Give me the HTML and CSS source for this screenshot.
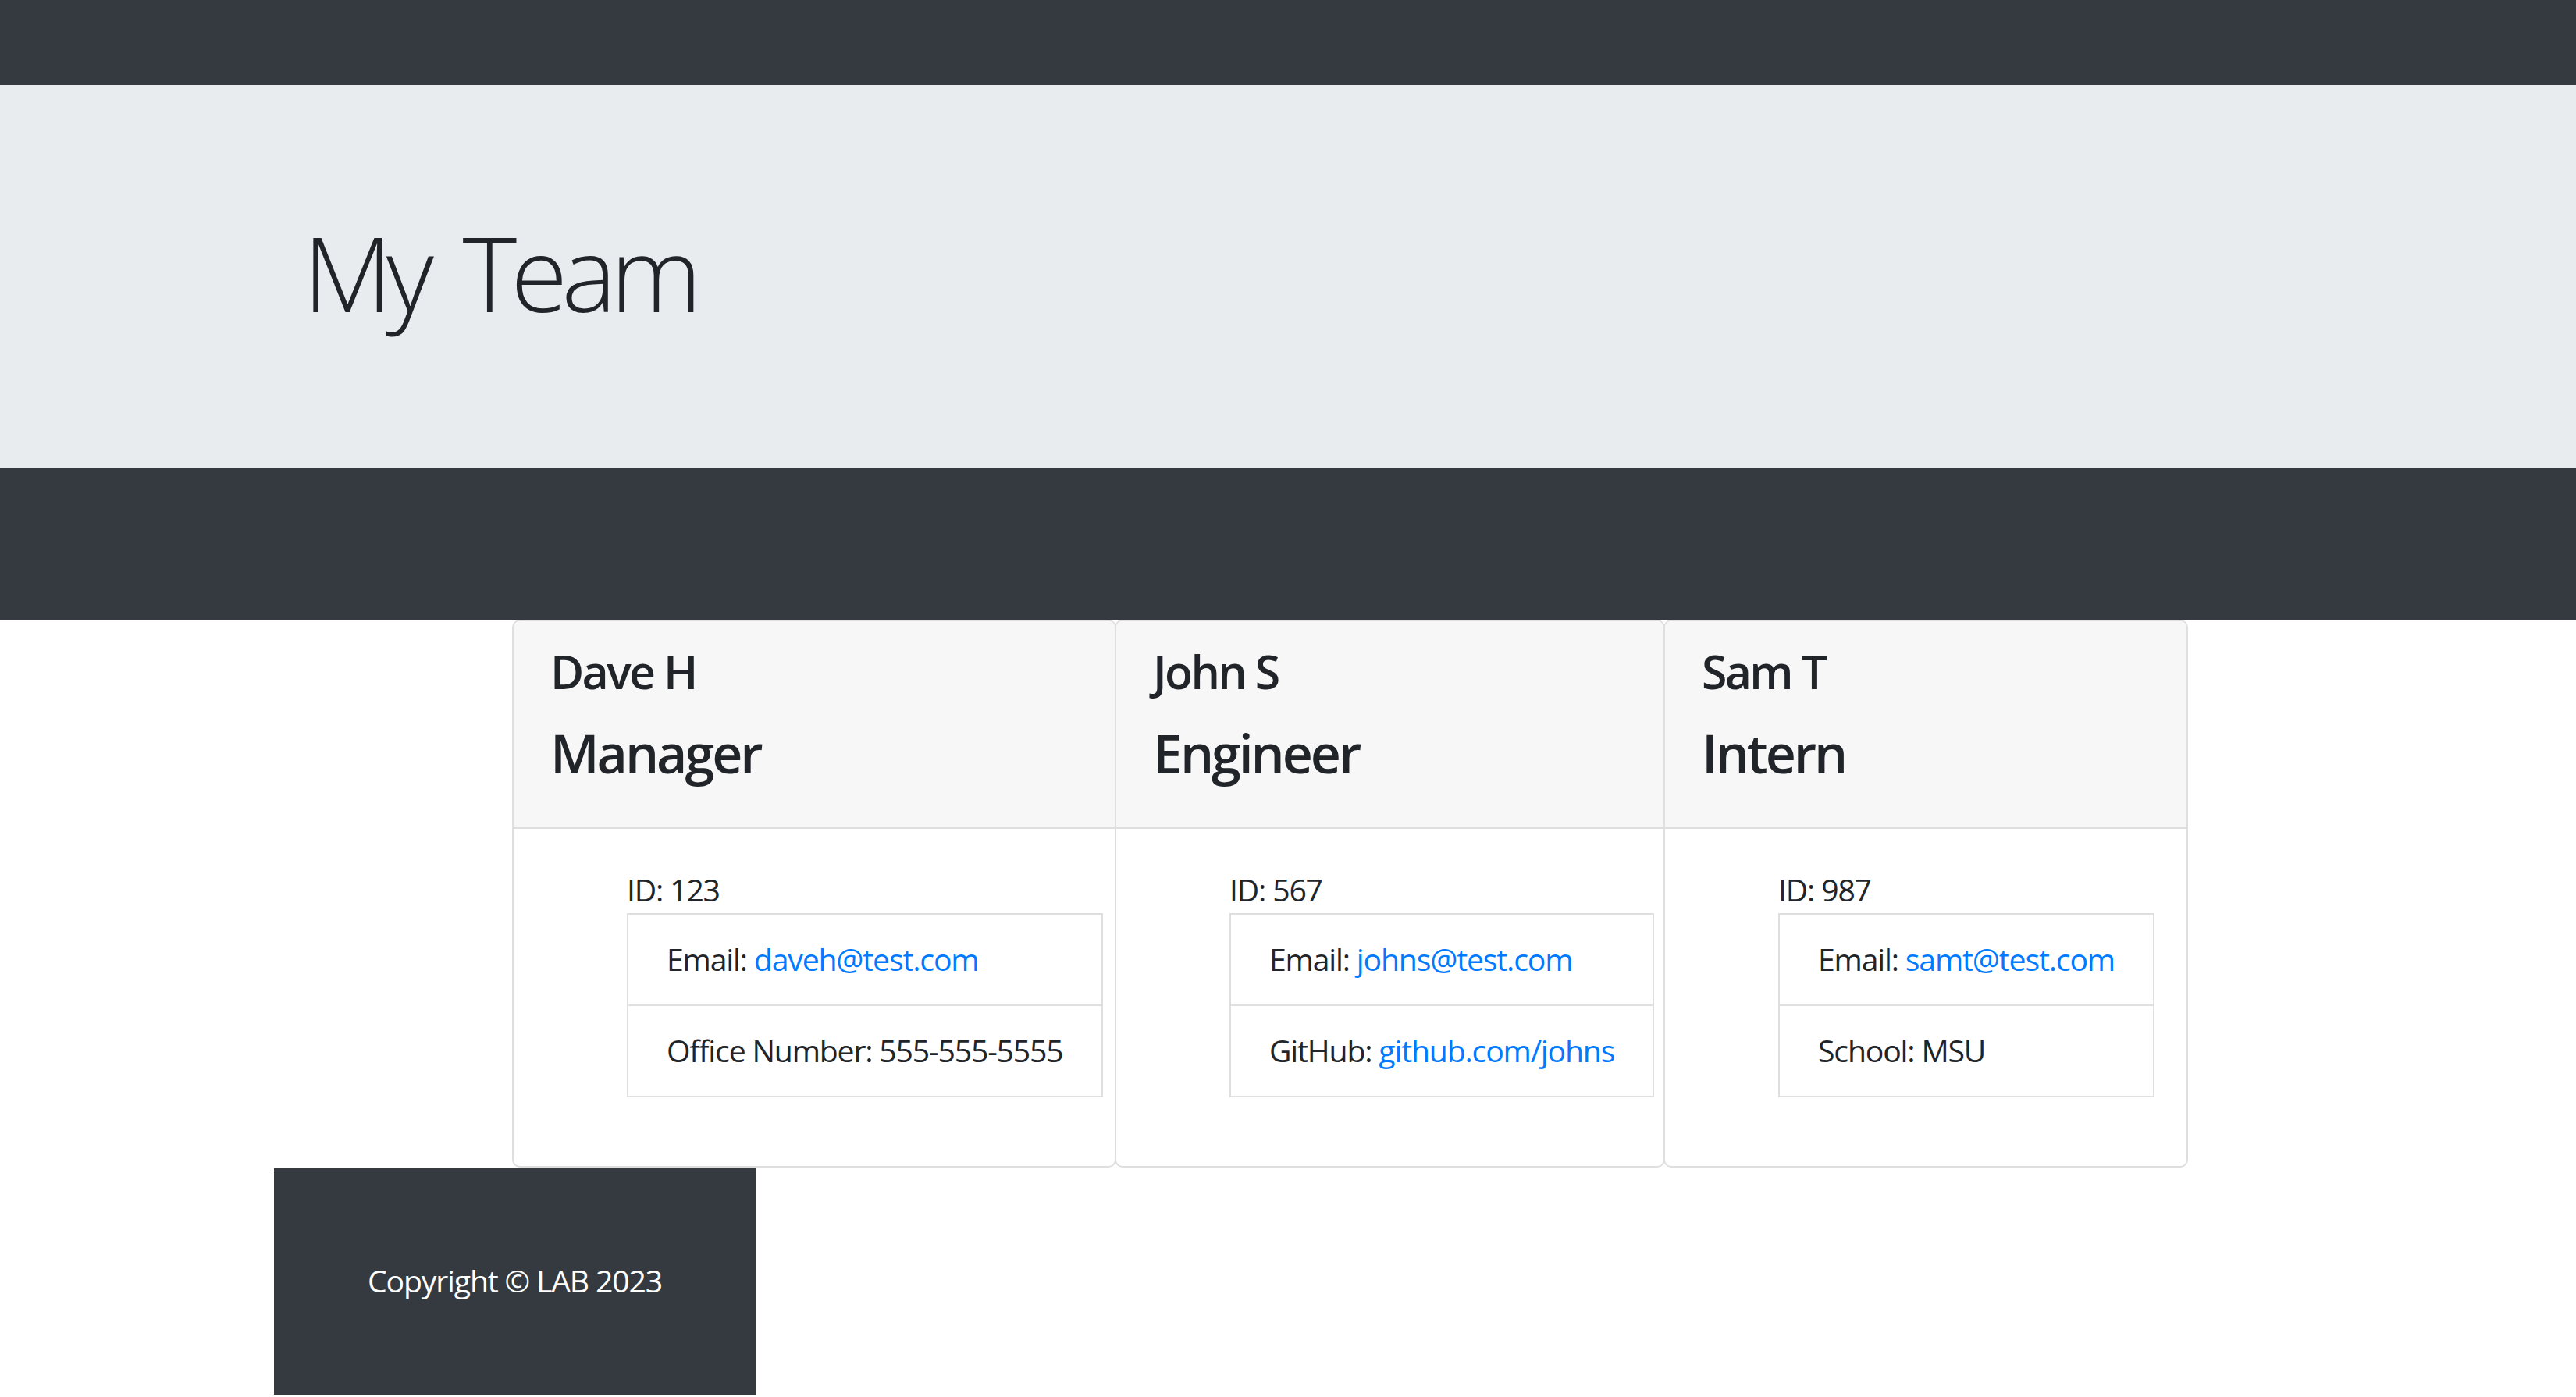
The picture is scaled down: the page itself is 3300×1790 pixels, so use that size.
FILE: index.html
```html
<!DOCTYPE html>
<html lang="en">
<head>
<meta charset="utf-8">
<title>My Team</title>
<link rel="stylesheet" href="styles.css">
</head>
<body>
<nav class="topbar"></nav>
<header class="hero">
  <h1 class="hero-title">My Team</h1>
</header>
<div class="subbar"></div>
<main class="team">
  <section class="card card-manager">
    <div class="card-header">
      <h2 class="card-name">Dave H</h2>
      <h3 class="card-role">Manager</h3>
    </div>
    <div class="card-body">
      <div class="details">
        <p class="emp-id">ID: 123</p>
        <ul class="list-group">
          <li class="list-item">Email: <a class="link" href="mailto:daveh@test.com">daveh@test.com</a></li>
          <li class="list-item">Office Number: 555-555-5555</li>
        </ul>
      </div>
    </div>
  </section>
  <section class="card card-engineer">
    <div class="card-header">
      <h2 class="card-name">John S</h2>
      <h3 class="card-role">Engineer</h3>
    </div>
    <div class="card-body">
      <div class="details">
        <p class="emp-id">ID: 567</p>
        <ul class="list-group">
          <li class="list-item">Email: <a class="link" href="mailto:johns@test.com">johns@test.com</a></li>
          <li class="list-item">GitHub: <a class="link" href="#">github.com/johns</a></li>
        </ul>
      </div>
    </div>
  </section>
  <section class="card card-intern">
    <div class="card-header">
      <h2 class="card-name">Sam T</h2>
      <h3 class="card-role">Intern</h3>
    </div>
    <div class="card-body">
      <div class="details">
        <p class="emp-id">ID: 987</p>
        <ul class="list-group">
          <li class="list-item">Email: <a class="link" href="mailto:samt@test.com">samt@test.com</a></li>
          <li class="list-item">School: MSU</li>
        </ul>
      </div>
    </div>
  </section>
</main>
<footer class="site-footer">
  <p class="copyright">Copyright © LAB 2023</p>
</footer>
</body>
</html>
```
FILE: styles.css
```css
* {
  box-sizing: border-box;
}

html,
body {
  margin: 0;
  padding: 0;
}

body {
  font-family: "Open Sans", "Noto Sans", sans-serif;
  font-size: 39.2px;
  line-height: 58.8px;
  color: #212529;
  background: #ffffff;
  letter-spacing: -0.03em;
}

.topbar {
  height: 109px;
  background: #343a40;
}

.hero {
  height: 491px;
  background: #e9ecef;
  padding: 160px 0 0 388px;
}

.hero-title {
  margin: 0;
  font-size: 133px;
  font-weight: 300;
  line-height: 160px;
  letter-spacing: -0.06em;
  word-spacing: 18px;
}

.subbar {
  height: 194px;
  background: #343a40;
}

.team {
  display: flex;
  align-items: stretch;
  padding-left: 656px;
}

.card {
  flex: none;
  display: flex;
  flex-direction: column;
  border: 2px solid #dfdfdf;
  border-radius: 10px;
  background: #ffffff;
}

.card + .card {
  margin-left: -2px;
}

.card-manager {
  width: 774px;
}

.card-engineer {
  width: 705px;
}

.card-intern {
  width: 672px;
}

.card-header {
  background: #f7f7f7;
  border-bottom: 2px solid #dfdfdf;
  border-radius: 8px 8px 0 0;
  padding: 28.7px 47px 54.6px;
}

.card-name {
  margin: 0 0 28.3px;
  font-size: 59px;
  font-weight: 600;
  line-height: 70.8px;
  letter-spacing: -0.045em;
}

.card-role {
  margin: 0;
  font-size: 68px;
  font-weight: 600;
  line-height: 81.6px;
  letter-spacing: -0.045em;
}

.card-body {
  flex: 1;
  padding: 49.4px 49px 49px;
}

.details {
  padding-left: 96px;
}

.emp-id {
  margin: 0;
}

.list-group {
  list-style: none;
  margin: 0 0 39.2px;
  padding: 0;
  width: max-content;
}

.list-item {
  padding: 28px 49px;
  border: 2px solid #dfdfdf;
  border-bottom: 0;
}

.list-item:last-child {
  border-bottom: 2px solid #dfdfdf;
}

.link {
  color: #007bff;
  text-decoration: none;
}

.site-footer {
  width: 617px;
  margin: 1px 0 0 351px;
  padding: 115px 0 116px;
  background: #343a40;
  color: #ffffff;
  text-align: center;
}

.copyright {
  margin: 0;
  font-weight: 400;
}
```
